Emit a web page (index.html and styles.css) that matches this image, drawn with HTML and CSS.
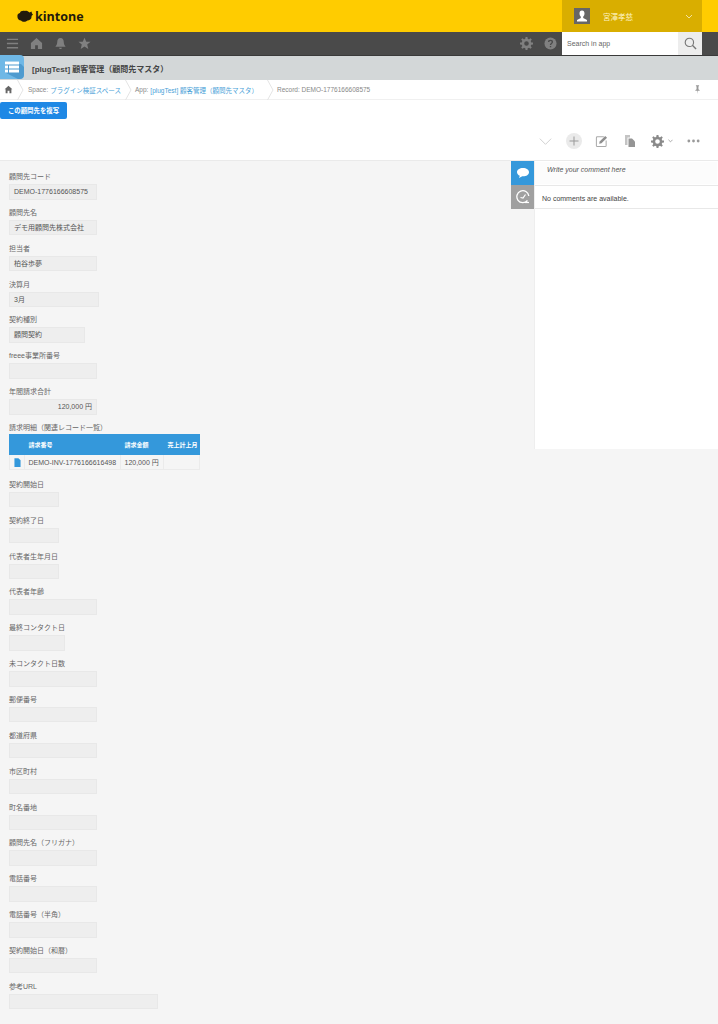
FILE: index.html
```html
<!DOCTYPE html>
<html>
<head>
    <meta charset="utf-8">
    <link rel="stylesheet" href="styles.css">
</head>

<body>

<div class='top_bar'>
    <div class='logo'>
        <svg class='logo_mark' viewBox="0 0 16 12"><path d="M.5 6C0 4 2 3.500 3 3C3 1 6 .5 8 1C10 0 11.500 1.500 12.500 2.500L14.500 1.500L15 3.500L16 4.500L14.500 6C15 9 12.500 10.500 10.500 10.500C8.500 12.500 5 12 4 10.500C2 10.500 0 8.500 .5 6Z" fill="#231a0c"/></svg>
        <span class='logo_text'>kintone</span>
    </div>
    <div class='user_box'>
        <svg class='avatar' viewBox="0 0 16 16"><rect width="16" height="16" fill="#666"/><path d="M8 2.500C6.300 2.500 5.500 3.800 5.500 5.500C5.500 7 6.200 8 6.800 8.700V10L3 12V13.500H13V12L9.200 10V8.700C9.800 8 10.500 7 10.500 5.500C10.500 3.800 9.700 2.500 8 2.500Z" fill="#fff"/></svg>
        <span class='user_name'>宮澤孝慈</span>
        <svg class='user_arrow' viewBox="0 0 8 5"><path d="M1 1L4 4L7 1" fill="none" stroke="#f2e3a0" stroke-width="1"/></svg>
    </div>
</div>

<div class='nav_bar'>
    <svg class='nav_icon' viewBox="0 0 14 14"><path d="M1 2.500H13M1 7H13M1 11.500H13" stroke="#808080" stroke-width="1.500"/></svg>
    <svg class='nav_icon' viewBox="0 0 14 14"><path d="M7 1L1 6.500V13H5.500V9H8.500V13H13V6.500Z" fill="#808080"/></svg>
    <svg class='nav_icon' viewBox="0 0 14 14"><path d="M7 1C4.500 1 3.500 3 3.500 5.500C3.500 8 2.500 9 1.500 10.500H12.500C11.500 9 10.500 8 10.500 5.500C10.500 3 9.500 1 7 1ZM5.500 11.500C5.500 13.500 8.500 13.500 8.500 11.500Z" fill="#808080"/></svg>
    <svg class='nav_icon' viewBox="0 0 14 14"><path d="M7 .7L8.900 5H13.500L9.900 8L11.100 13L7 10.300L2.900 13L4.100 8L.5 5H5.100Z" fill="#808080"/></svg>
    <div class='nav_right'>
        <svg class='nav_icon' viewBox="0 0 14 14"><path d="M6 0H8L8.300 2L9.700 2.600L11.300 1.400L12.700 2.800L11.500 4.400L12.100 5.800L14 6V8L12.100 8.300L11.500 9.700L12.700 11.200L11.300 12.600L9.700 11.500L8.300 12L8 14H6L5.700 12L4.300 11.500L2.700 12.600L1.300 11.200L2.500 9.700L1.900 8.300L0 8V6L1.900 5.800L2.500 4.400L1.300 2.800L2.700 1.400L4.300 2.600L5.700 2ZM7 4.500A2.500 2.500 0 1 0 7 9.500A2.500 2.500 0 1 0 7 4.500Z" fill="#808080" fill-rule="evenodd"/></svg>
        <svg class='nav_icon' viewBox="0 0 14 14"><circle cx="7" cy="7" r="6.500" fill="#808080"/><path d="M5 5.500C5 3 9 3 9 5.500C9 7 7 7 7 8.500M7 9.700V11" fill="none" stroke="#4a4a4a" stroke-width="1.500"/></svg>
    </div>
    <div class='search_box'>
        <span class='search_text'>Search in app</span>
        <div class='search_btn'>
            <svg viewBox="0 0 14 14"><circle cx="5.800" cy="5.800" r="4.500" fill="none" stroke="#777" stroke-width="1.200"/><path d="M9 9L13 13" stroke="#777" stroke-width="1.500"/></svg>
        </div>
    </div>
</div>

<div class='title_bar'>
    <div class='app_icon'>
        <svg viewBox="0 0 24 24"><path d="M5 6.500H19V9H21L24 12V20Q24 24 20 24H18L5 17.500Z" fill="#4f9bcf"/><rect x="5" y="6.500" width="14" height="3" fill="#fff"/><rect x="5" y="10.500" width="3" height="3" fill="#fff"/><rect x="9" y="10.500" width="10" height="3" fill="#fff"/><rect x="5" y="14.500" width="3" height="3" fill="#fff"/><rect x="9" y="14.500" width="10" height="3" fill="#fff"/></svg>
    </div>
    <span class='app_title'>[plugTest] 顧客管理（顧問先マスタ）</span>
</div>

<div class='breadcrumb'>
    <div class='crumb crumb_home'>
        <svg viewBox="0 0 14 14"><path d="M7 1L1 6.500H2.500V13H5.500V9H8.500V13H11.500V6.500H13Z" fill="#666"/></svg>
    </div>
    <svg class='crumb_sep' viewBox="0 0 7 20"><path d="M.5 0L6 10L.5 20" fill="none" stroke="#e4e4e4" stroke-width="1"/></svg>
    <div class='crumb crumb_space'>Space: <a>プラグイン検証スペース</a></div>
    <svg class='crumb_sep' viewBox="0 0 7 20"><path d="M.5 0L6 10L.5 20" fill="none" stroke="#e4e4e4" stroke-width="1"/></svg>
    <div class='crumb crumb_app'>App: <a>[plugTest] 顧客管理（顧問先マスタ）</a></div>
    <svg class='crumb_sep' viewBox="0 0 7 20"><path d="M.5 0L6 10L.5 20" fill="none" stroke="#e4e4e4" stroke-width="1"/></svg>
    <div class='crumb crumb_last'>Record: DEMO-1776166608575</div>
    <svg class='pin' viewBox="0 0 8 14"><path d="M1.500 0H6.500V1.500L5.500 2V6.500L7.500 8V9H4.500L4 14L3.500 9H.5V8L2.500 6.500V2L1.500 1.500Z" fill="#999"/></svg>
</div>

<div class='action_row'>
    <div class='copy_btn'>この顧問先を複写</div>
</div>

<div class='toolbar'>
    <svg class='tool_chevron' viewBox="0 0 16 16"><path d="M1 4.500L8 11.500L15 4.500" fill="none" stroke="#c8c8c8" stroke-width="1"/></svg>
    <div class='tool_add'><svg viewBox="0 0 10 10"><path d="M5 .5V9.500M.5 5H9.500" stroke="#999" stroke-width="1"/></svg></div>
    <svg class='tool_edit' viewBox="0 0 14 14"><path d="M9.500 2H2.500Q1.500 2 1.500 3V11.500Q1.500 12.500 2.500 12.500H11Q12 12.500 12 11.500V6" fill="none" stroke="#aaa" stroke-width="1.100"/><path d="M5 7L11 1L13 3L7 9L4.500 9.500Z" fill="#8f8f8f"/></svg>
    <svg class='tool_copy' viewBox="0 0 12 14"><path d="M1 1H6V3.500H3.500V11H1Z" fill="#c4c4c4"/><path d="M4.500 4.500H8L11 7.500V13H4.500Z" fill="#959595"/></svg>
    <div class='tool_gear'>
        <svg viewBox="0 0 14 14"><path d="M6 0H8L8.300 2L9.700 2.600L11.300 1.400L12.700 2.800L11.500 4.400L12.100 5.800L14 6V8L12.100 8.300L11.500 9.700L12.700 11.200L11.300 12.600L9.700 11.500L8.300 12L8 14H6L5.700 12L4.300 11.500L2.700 12.600L1.300 11.200L2.500 9.700L1.900 8.300L0 8V6L1.900 5.800L2.500 4.400L1.300 2.800L2.700 1.400L4.300 2.600L5.700 2ZM7 4.500A2.500 2.500 0 1 0 7 9.500A2.500 2.500 0 1 0 7 4.500Z" fill="#8a8a8a" fill-rule="evenodd"/></svg>
        <svg class='gear_arrow' viewBox="0 0 6 4"><path d="M.5 .5L3 3L5.500 .5" fill="none" stroke="#999" stroke-width="1"/></svg>
    </div>
    <svg class='tool_dots' viewBox="0 0 14 4"><circle cx="2" cy="2" r="1.500" fill="#999"/><circle cx="7" cy="2" r="1.500" fill="#999"/><circle cx="12" cy="2" r="1.500" fill="#999"/></svg>
</div>

<div class='content'>
    <div class='record'>
        <div class='field'><div class='label'>顧問先コード</div><div class='value'>DEMO-1776166608575</div></div>
        <div class='field'><div class='label'>顧問先名</div><div class='value'>デモ用顧問先株式会社</div></div>
        <div class='field'><div class='label'>担当者</div><div class='value'>柏谷歩夢</div></div>
        <div class='field'><div class='label'>決算月</div><div class='value w_90'>3月</div></div>
        <div class='field'><div class='label'>契約種別</div><div class='value w_76'>顧問契約</div></div>
        <div class='field'><div class='label'>freee事業所番号</div><div class='value'></div></div>
        <div class='field'><div class='label'>年間請求合計</div><div class='value right'>120,000 円</div></div>

        <div class='field field_table'>
            <div class='label'>請求明細（関連レコード一覧）</div>
            <table class='related'>
                <tr>
                    <th class='col_icon'></th>
                    <th class='col_no'>請求番号</th>
                    <th class='col_amount'>請求金額</th>
                    <th class='col_month'>売上計上月</th>
                </tr>
                <tr>
                    <td class='col_icon'><svg viewBox="0 0 8 10"><path d="M.5 0H5L7.500 2.500V10H.5Z" fill="#3498db"/></svg></td>
                    <td>DEMO-INV-1776166616498</td>
                    <td>120,000 円</td>
                    <td></td>
                </tr>
            </table>
        </div>

        <div class='field'><div class='label'>契約開始日</div><div class='value w_50'></div></div>
        <div class='field'><div class='label'>契約終了日</div><div class='value w_50'></div></div>
        <div class='field'><div class='label'>代表者生年月日</div><div class='value w_50'></div></div>
        <div class='field'><div class='label'>代表者年齢</div><div class='value'></div></div>
        <div class='field'><div class='label'>最終コンタクト日</div><div class='value w_56'></div></div>
        <div class='field'><div class='label'>未コンタクト日数</div><div class='value'></div></div>
        <div class='field'><div class='label'>郵便番号</div><div class='value'></div></div>
        <div class='field'><div class='label'>都道府県</div><div class='value'></div></div>
        <div class='field'><div class='label'>市区町村</div><div class='value'></div></div>
        <div class='field'><div class='label'>町名番地</div><div class='value'></div></div>
        <div class='field'><div class='label'>顧問先名（フリガナ）</div><div class='value'></div></div>
        <div class='field'><div class='label'>電話番号</div><div class='value'></div></div>
        <div class='field'><div class='label'>電話番号（半角）</div><div class='value'></div></div>
        <div class='field'><div class='label'>契約開始日（和暦）</div><div class='value'></div></div>
        <div class='field'><div class='label'>参考URL</div><div class='value w_149'></div></div>
    </div>

    <div class='side'>
        <div class='side_tabs'>
            <div class='side_tab tab_comment'>
                <svg viewBox="0 0 14 14"><path d="M7 2C3.500 2 1 3.800 1 6.200C1 7.800 2.200 9 3.800 9.800L3 12L6.300 10.300H7C10.500 10.300 13 8.600 13 6.200C13 3.800 10.500 2 7 2Z" fill="#fff"/></svg>
            </div>
            <div class='side_tab tab_history'>
                <svg viewBox="0 0 14 14"><path d="M11.500 10.500A6 6 0 1 1 12.800 6" fill="none" stroke="#fff" stroke-width="1.300"/><path d="M4.500 7.500L7 8L9.500 4.500" fill="none" stroke="#fff" stroke-width="1.200"/><path d="M9 12.500H13" stroke="#fff" stroke-width="1.200"/></svg>
            </div>
        </div>
        <div class='side_pane'>
            <div class='comment_box'>
                <div class='comment_input'>Write your comment here</div>
            </div>
            <div class='no_comment'>No comments are available.</div>
        </div>
    </div>
</div>

</body>
</html>
```

FILE: styles.css
```css
* {
    box-sizing: border-box;
}
html, body {
    margin: 0;
    padding: 0;
}
body {
    background: #f5f5f5;
    font-family: "Liberation Sans", "Noto Sans CJK JP", sans-serif;
    font-size: 7px;
    color: #555;
    height: 1024px;
    overflow: hidden;
}
svg {
    display: block;
}

.top_bar {
    height: 32px;
    background: #ffcc00;
    display: flex;
    justify-content: space-between;
    padding: 0 16px 0 17px;
    align-items: stretch;
}
.logo {
    display: flex;
    align-items: center;
    gap: 2px;
}
.logo_mark {
    width: 16px;
    height: 12px;
}
.logo_text {
    font-family: "Open Sans", sans-serif;
    font-size: 12.5px;
    font-weight: 700;
    color: #231a0c;
}
.user_box {
    width: 140px;
    background: #d9ae00;
    display: flex;
    align-items: center;
    padding: 0 9px 0 12px;
}
.avatar {
    width: 16px;
    height: 16px;
}
.user_name {
    margin-left: 13px;
    color: #fdf2c0;
    font-size: 7.5px;
    flex: 1;
}
.user_arrow {
    width: 8px;
    height: 5px;
}

.nav_bar {
    height: 24px;
    background: #4a4a4a;
    border-bottom: 1px solid #3a3a3a;
    display: flex;
    align-items: center;
    padding: 0 16px 0 6px;
    gap: 11px;
}
.nav_icon {
    width: 13px;
    height: 13px;
}
.nav_right {
    margin-left: auto;
    display: flex;
    gap: 11px;
}
.search_box {
    width: 140px;
    height: 100%;
    background: #fff;
    display: flex;
    align-items: center;
    margin-left: -6px;
    padding-left: 5px;
    justify-content: space-between;
}
.search_text {
    color: #666;
}
.search_btn {
    width: 24px;
    height: 100%;
    background: #ededed;
    display: flex;
    align-items: center;
    justify-content: center;
}
.search_btn svg {
    width: 13px;
    height: 13px;
}

.title_bar {
    height: 24px;
    background: #d3d7d8;
    display: flex;
    align-items: center;
    padding-left: 32px;
    position: relative;
}
.app_icon {
    position: absolute;
    left: 0;
    top: -1px;
    width: 24px;
    height: 24px;
    background: #6fb8e6;
    border-radius: 0 4px 4px 0;
    overflow: hidden;
}
.app_title {
    font-size: 8px;
    font-weight: 700;
    color: #444;
}

.breadcrumb {
    height: 20px;
    background: #fff;
    border-bottom: 1px solid #f0f0f0;
    display: flex;
    align-items: center;
    color: #888;
    font-size: 6.5px;
    position: relative;
}
.crumb {
    display: flex;
    align-items: center;
    gap: 2px;
    white-space: nowrap;
}
.crumb a {
    color: #4a9fd8;
}
.crumb_home {
    width: 17px;
    padding-left: 4px;
}
.crumb_home svg {
    width: 9px;
    height: 9px;
}
.crumb_sep {
    width: 7px;
    height: 20px;
    flex: none;
}
.crumb_space {
    padding: 0 4px 0 4px;
}
.crumb_app {
    padding: 0 9px 0 3px;
}
.crumb_last {
    padding-left: 3px;
}
.pin {
    position: absolute;
    right: 18px;
    top: 5px;
    width: 5px;
    height: 9px;
}

.action_row {
    height: 22px;
    background: #fff;
    padding-top: 2px;
}
.copy_btn {
    width: 67px;
    height: 17px;
    background: #1e88e5;
    border-radius: 2px;
    color: #fff;
    font-size: 6.4px;
    font-weight: 700;
    display: flex;
    align-items: center;
    justify-content: center;
}

.toolbar {
    height: 39px;
    background: #fff;
    border-bottom: 1px solid #eaeaea;
    display: flex;
    align-items: center;
    justify-content: flex-end;
    padding-right: 18px;
}
.tool_chevron {
    width: 13px;
    height: 13px;
}
.tool_add {
    width: 16px;
    height: 16px;
    margin-left: 14px;
    border-radius: 50%;
    background: #eaeaea;
    display: flex;
    align-items: center;
    justify-content: center;
}
.tool_add svg {
    width: 10px;
    height: 10px;
}
.tool_edit {
    width: 13px;
    height: 13px;
    margin-left: 13px;
}
.tool_copy {
    width: 12px;
    height: 14px;
    margin-left: 16px;
}
.tool_gear {
    display: flex;
    align-items: center;
    gap: 4px;
    margin-left: 15px;
}
.tool_gear svg:first-child {
    width: 13px;
    height: 13px;
}
.gear_arrow {
    width: 5px;
    height: 4px;
}
.tool_dots {
    width: 13px;
    height: 4px;
    margin-left: 14px;
}

.content {
    display: flex;
    justify-content: space-between;
    align-items: flex-start;
}
.record {
    padding: 9px 0 0 9px;
}
.field {
    height: 35.85px;
}
.field_table {
    height: 57px;
}
.label {
    height: 14px;
    line-height: 14px;
    color: #666;
    white-space: nowrap;
}
.field_table .label {
    height: 13.5px;
}
.value {
    width: 88px;
    height: 15.5px;
    background: #eeeeee;
    border: 1px solid #e8e8e8;
    padding: 0 4px;
    line-height: 14px;
    color: #555;
    white-space: nowrap;
}
.right {
    text-align: right;
}
.w_90 { width: 90px; }
.w_76 { width: 76px; }
.w_50 { width: 50px; }
.w_56 { width: 56px; }
.w_149 { width: 149px; }

.related {
    border-collapse: collapse;
    width: 191px;
    table-layout: fixed;
}
.related th {
    height: 20px;
    background: #3498db;
    border: 1px solid #3498db;
    color: #fff;
    font-size: 6px;
    font-weight: 700;
    text-align: left;
    padding: 0 3px 0 4px;
    white-space: nowrap;
}
.related td {
    height: 15px;
    border: 1px solid #ebebeb;
    color: #555;
    padding: 0 3px 0 4px;
    white-space: nowrap;
}
.related .col_icon {
    width: 14.5px;
    padding: 0 0 0 4px;
}
.related .col_icon svg {
    width: 7px;
    height: 9px;
}
.col_no { width: 96px; }
.col_amount { width: 43px; }

.side {
    display: flex;
    align-items: flex-start;
    width: 207px;
}
.side_tabs {
    width: 23px;
    flex: none;
}
.side_tab {
    height: 24px;
    display: flex;
    align-items: center;
    justify-content: center;
}
.side_tab svg {
    width: 14px;
    height: 14px;
}
.tab_comment {
    background: #3498db;
}
.tab_history {
    background: #a0a0a0;
}
.side_pane {
    flex: 1;
    height: 288px;
    background: #fff;
    border-left: 1px solid #eee;
}
.comment_box {
    height: 25px;
    border-bottom: 1px solid #e8e8e8;
    padding: 1px 1px 0 0;
}
.comment_input {
    height: 22px;
    background: #fcfcfc;
    padding: 4px 0 0 12px;
    font-style: italic;
    color: #555;
}
.no_comment {
    height: 23px;
    line-height: 26px;
    border-bottom: 1px solid #e8e8e8;
    padding-left: 7px;
    color: #444;
}
```
